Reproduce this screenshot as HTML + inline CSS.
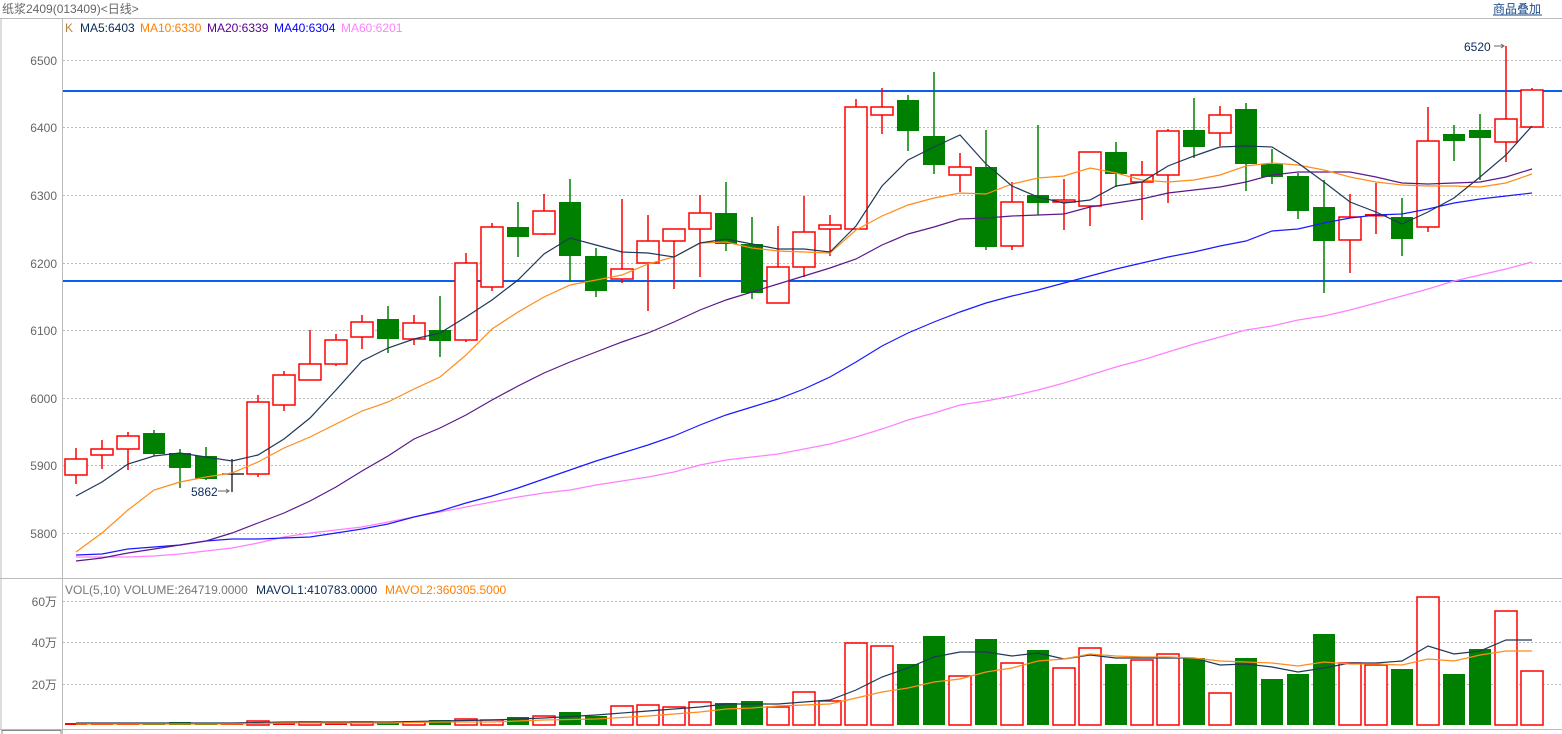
<!DOCTYPE html>
<html><head><meta charset="utf-8"><style>
body{margin:0;background:#fff;width:1562px;height:734px;overflow:hidden;font-family:"Liberation Sans","Noto Sans CJK SC",sans-serif}
svg{display:block}
.r{fill:#fff;stroke:#f00;stroke-width:1.5}
.rw{stroke:#f00;stroke-width:1.5;fill:none}
.g{fill:#008000}
.gw{stroke:#008000;stroke-width:1.5}
.grid{stroke:#bbb;stroke-width:1;stroke-dasharray:2,2}
.ax{font-size:12px;fill:#666;text-anchor:end}
text{font-family:"Liberation Sans","Noto Sans CJK SC",sans-serif}
.ma{fill:none;stroke-width:1.2}
</style></head><body>
<svg width="1562" height="734" viewBox="0 0 1562 734">
<text x="2" y="13" font-size="12" fill="#666">纸浆2409(013409)&lt;日线&gt;</text>
<text x="1493" y="13" font-size="12" fill="#1a4a8a">商品叠加</text>
<line x1="1493" y1="15" x2="1542" y2="15" stroke="#1a4a8a"/>
<line x1="0" y1="18.5" x2="1562" y2="18.5" stroke="#bbb"/>
<line x1="1" y1="18" x2="1" y2="729" stroke="#bbb"/>
<line x1="62.5" y1="18" x2="62.5" y2="734" stroke="#bbb"/>
<line x1="0" y1="578.5" x2="1562" y2="578.5" stroke="#bbb"/>
<line x1="0" y1="729.5" x2="1562" y2="729.5" stroke="#bbb"/>
<rect x="2" y="730.5" width="59" height="6" fill="none" stroke="#888"/>
<text x="65" y="32" font-size="12" fill="#c08040">K</text>
<text x="80" y="32" font-size="12" fill="#0a2a5a">MA5:6403</text>
<text x="140" y="32" font-size="12" fill="#ff8000">MA10:6330</text>
<text x="207" y="32" font-size="12" fill="#5a0090">MA20:6339</text>
<text x="274" y="32" font-size="12" fill="#0000ff">MA40:6304</text>
<text x="341" y="32" font-size="12" fill="#ff80ff">MA60:6201</text>
<g class="grid">
<line x1="63" y1="60.5" x2="1562" y2="60.5"/><line x1="63" y1="127.5" x2="1562" y2="127.5"/><line x1="63" y1="195.5" x2="1562" y2="195.5"/><line x1="63" y1="263.5" x2="1562" y2="263.5"/><line x1="63" y1="330.5" x2="1562" y2="330.5"/><line x1="63" y1="398.5" x2="1562" y2="398.5"/><line x1="63" y1="465.5" x2="1562" y2="465.5"/><line x1="63" y1="533.5" x2="1562" y2="533.5"/>
<line x1="63" y1="601.5" x2="1562" y2="601.5"/><line x1="63" y1="642.5" x2="1562" y2="642.5"/><line x1="63" y1="684.5" x2="1562" y2="684.5"/>
</g>
<g class="ax">
<text x="57" y="65">6500</text><text x="57" y="132">6400</text><text x="57" y="200">6300</text><text x="57" y="268">6200</text><text x="57" y="335">6100</text><text x="57" y="403">6000</text><text x="57" y="470">5900</text><text x="57" y="538">5800</text>
<text x="57" y="606">60万</text><text x="57" y="647">40万</text><text x="57" y="689">20万</text>
</g>
<line x1="63" y1="91" x2="1562" y2="91" stroke="#0a5ef0" stroke-width="2"/>
<line x1="63" y1="281" x2="1562" y2="281" stroke="#0a5ef0" stroke-width="2"/>

<g>
<rect class="r" x="65" y="459" width="22" height="16"/><path class="rw" d="M76 448V459M76 475V484"/>
<rect class="r" x="91" y="449" width="22" height="6"/><path class="rw" d="M102 440V449M102 455V469"/>
<rect class="r" x="117" y="436" width="22" height="13"/><path class="rw" d="M128 432V436M128 449V470"/>
<line class="gw" x1="154" y1="430" x2="154" y2="456"/><rect class="g" x="143" y="433" width="22" height="21"/>
<line class="gw" x1="180" y1="449" x2="180" y2="488"/><rect class="g" x="169" y="453" width="22" height="15"/>
<line class="gw" x1="206" y1="447" x2="206" y2="480"/><rect class="g" x="195" y="456" width="22" height="23"/>
<path d="M232 459V492M222 474H244" stroke="#000" stroke-width="1.2" fill="none"/>
<text x="191" y="496" font-size="12" fill="#0a2a5a">5862</text><path d="M218 491H229M226 489L229 491L226 493" stroke="#666" fill="none"/>
<rect class="r" x="247" y="402" width="22" height="72"/><path class="rw" d="M258 395V402M258 474V477"/>
<rect class="r" x="273" y="375" width="22" height="30"/><path class="rw" d="M284 371V375M284 405V411"/>
<rect class="r" x="299" y="364" width="22" height="16"/><path class="rw" d="M310 330V364"/>
<rect class="r" x="325" y="340" width="22" height="24"/><path class="rw" d="M336 334V340M336 364V366"/>
<rect class="r" x="351" y="322" width="22" height="15"/><path class="rw" d="M362 315V322M362 337V349"/>
<line class="gw" x1="388" y1="306" x2="388" y2="353"/><rect class="g" x="377" y="319" width="22" height="20"/>
<rect class="r" x="403" y="323" width="22" height="16"/><path class="rw" d="M414 315V323M414 339V345"/>
<line class="gw" x1="440" y1="296" x2="440" y2="357"/><rect class="g" x="429" y="330" width="22" height="11"/>
<rect class="r" x="455" y="263" width="22" height="77"/><path class="rw" d="M466 253V263M466 340V342"/>
<rect class="r" x="481" y="227" width="22" height="60"/><path class="rw" d="M492 223V227M492 287V291"/>
<line class="gw" x1="518" y1="202" x2="518" y2="257"/><rect class="g" x="507" y="227" width="22" height="10"/>
<rect class="r" x="533" y="211" width="22" height="23"/><path class="rw" d="M544 194V211M544 234V235"/>
<line class="gw" x1="570" y1="179" x2="570" y2="281"/><rect class="g" x="559" y="202" width="22" height="54"/>
<line class="gw" x1="596" y1="248" x2="596" y2="297"/><rect class="g" x="585" y="256" width="22" height="35"/>
<rect class="r" x="611" y="269" width="22" height="10"/><path class="rw" d="M622 199V269M622 279V283"/>
<rect class="r" x="637" y="241" width="22" height="22"/><path class="rw" d="M648 215V241M648 263V311"/>
<rect class="r" x="663" y="229" width="22" height="12"/><path class="rw" d="M674 241V289"/>
<rect class="r" x="689" y="213" width="22" height="16"/><path class="rw" d="M700 195V213M700 229V277"/>
<line class="gw" x1="726" y1="182" x2="726" y2="251"/><rect class="g" x="715" y="213" width="22" height="31"/>
<line class="gw" x1="752" y1="217" x2="752" y2="299"/><rect class="g" x="741" y="244" width="22" height="49"/>
<rect class="r" x="767" y="267" width="22" height="36"/><path class="rw" d="M778 226V267"/>
<rect class="r" x="793" y="232" width="22" height="35"/><path class="rw" d="M804 196V232M804 267V277"/>
<rect class="r" x="819" y="225" width="22" height="4"/><path class="rw" d="M830 215V225M830 229V256"/>
<rect class="r" x="845" y="107" width="22" height="122"/><path class="rw" d="M856 99V107"/>
<rect class="r" x="871" y="107" width="22" height="8"/><path class="rw" d="M882 88V107M882 115V134"/>
<line class="gw" x1="908" y1="95" x2="908" y2="151"/><rect class="g" x="897" y="100" width="22" height="31"/>
<line class="gw" x1="934" y1="72" x2="934" y2="174"/><rect class="g" x="923" y="136" width="22" height="29"/>
<rect class="r" x="949" y="167" width="22" height="8"/><path class="rw" d="M960 153V167M960 175V192"/>
<line class="gw" x1="986" y1="130" x2="986" y2="250"/><rect class="g" x="975" y="167" width="22" height="80"/>
<rect class="r" x="1001" y="202" width="22" height="44"/><path class="rw" d="M1012 182V202M1012 246V250"/>
<line class="gw" x1="1038" y1="125" x2="1038" y2="215"/><rect class="g" x="1027" y="195" width="22" height="8"/>
<rect class="r" x="1053" y="200" width="22" height="2"/><path class="rw" d="M1064 179V200M1064 202V230"/>
<rect class="r" x="1079" y="152" width="22" height="54"/><path class="rw" d="M1090 206V226"/>
<line class="gw" x1="1116" y1="142" x2="1116" y2="187"/><rect class="g" x="1105" y="152" width="22" height="22"/>
<rect class="r" x="1131" y="175" width="22" height="7"/><path class="rw" d="M1142 161V175M1142 182V220"/>
<rect class="r" x="1157" y="131" width="22" height="44"/><path class="rw" d="M1168 129V131M1168 175V203"/>
<line class="gw" x1="1194" y1="98" x2="1194" y2="158"/><rect class="g" x="1183" y="130" width="22" height="17"/>
<rect class="r" x="1209" y="115" width="22" height="18"/><path class="rw" d="M1220 106V115M1220 133V146"/>
<line class="gw" x1="1246" y1="103" x2="1246" y2="191"/><rect class="g" x="1235" y="109" width="22" height="55"/>
<line class="gw" x1="1272" y1="149" x2="1272" y2="184"/><rect class="g" x="1261" y="164" width="22" height="13"/>
<line class="gw" x1="1298" y1="173" x2="1298" y2="219"/><rect class="g" x="1287" y="176" width="22" height="35"/>
<line class="gw" x1="1324" y1="180" x2="1324" y2="293"/><rect class="g" x="1313" y="207" width="22" height="34"/>
<rect class="r" x="1339" y="217" width="22" height="23"/><path class="rw" d="M1350 194V217M1350 240V273"/>
<path class="rw" d="M1376 183V234"/><rect x="1365" y="214" width="22" height="2.5" fill="#f00"/>
<line class="gw" x1="1402" y1="198" x2="1402" y2="256"/><rect class="g" x="1391" y="217" width="22" height="22"/>
<rect class="r" x="1417" y="141" width="22" height="86"/><path class="rw" d="M1428 107V141M1428 227V232"/>
<line class="gw" x1="1454" y1="125" x2="1454" y2="161"/><rect class="g" x="1443" y="134" width="22" height="7"/>
<line class="gw" x1="1480" y1="114" x2="1480" y2="180"/><rect class="g" x="1469" y="130" width="22" height="8"/>
<rect class="r" x="1495" y="119" width="22" height="23"/><path class="rw" d="M1506 46V119M1506 142V162"/>
<rect class="r" x="1521" y="90" width="22" height="37"/><path class="rw" d="M1532 88V90"/>
<text x="1464" y="51" font-size="12" fill="#0a2a5a">6520</text><path d="M1494 46H1504M1501 44L1504 46L1501 48" stroke="#666" fill="none"/>
</g>

<polyline class="ma" stroke="#ff80ff" points="76,557 102,557 128,557 154,556 180,554 206,551 232,548 258,543 284,537 310,533 336,530 362,527 388,522 414,517 440,512 466,507 492,502 518,497 544,493 570,490 596,485 622,481 648,477 674,472 700,465 726,460 752,457 778,454 804,449 830,444 856,437 882,429 908,420 934,413 960,405 986,401 1012,396 1038,390 1064,383 1090,375 1116,367 1142,360 1168,352 1194,344 1220,337 1246,330 1272,326 1298,320 1324,316 1350,310 1376,303 1402,296 1428,289 1454,281 1480,275 1506,269 1532,262"/>
<polyline class="ma" stroke="#1a1aff" points="76,555 102,554 128,549 154,547 180,545 206,541 232,539 258,539 284,538 310,537 336,533 362,529 388,524 414,517 440,511 466,503 492,496 518,488 544,479 570,470 596,461 622,453 648,445 674,436 700,425 726,415 752,407 778,399 804,389 830,377 856,362 882,346 908,333 934,322 960,312 986,303 1012,296 1038,290 1064,283 1090,276 1116,269 1142,263 1168,257 1194,252 1220,246 1246,241 1272,231 1298,229 1324,223 1350,218 1376,215 1402,214 1428,209 1454,203 1480,199 1506,196 1532,193"/>
<polyline class="ma" stroke="#5a1a8a" points="76,561 102,558 128,553 154,549 180,545 206,541 232,533 258,523 284,513 310,501 336,487 362,471 388,456 414,439 440,428 466,415 492,400 518,386 544,373 570,362 596,352 622,342 648,333 674,322 700,310 726,300 752,292 778,284 804,276 830,268 856,259 882,245 908,234 934,227 960,219 986,218 1012,216 1038,215 1064,214 1090,207 1116,203 1142,199 1168,193 1194,190 1220,187 1246,182 1272,175 1298,172 1324,172 1350,172 1376,177 1402,183 1428,184 1454,183 1480,182 1506,177 1532,169"/>
<polyline class="ma" stroke="#ff8c1a" points="76,552 102,533 128,510 154,490 180,482 206,477 232,473 258,462 284,448 310,437 336,424 362,411 388,402 414,389 440,377 466,355 492,329 518,312 544,297 570,285 596,280 622,275 648,264 674,257 700,243 726,242 752,248 778,251 804,252 830,253 856,230 882,216 908,205 934,198 960,193 986,194 1012,184 1038,178 1064,176 1090,168 1116,173 1142,180 1168,182 1194,180 1220,175 1246,166 1272,163 1298,165 1324,170 1350,177 1376,182 1402,185 1428,186 1454,186 1480,187 1506,183 1532,174"/>
<polyline class="ma" stroke="#203858" points="76,496 102,482 128,464 154,456 180,453 206,457 232,461 258,455 284,439 310,418 336,390 362,361 388,348 414,339 440,333 466,317 492,300 518,280 544,254 570,238 596,245 622,252 648,253 674,257 700,243 726,239 752,244 778,249 804,249 830,252 856,226 882,186 908,160 934,147 960,135 986,164 1012,186 1038,197 1064,203 1090,200 1116,186 1142,182 1168,166 1194,156 1220,147 1246,146 1272,147 1298,163 1324,182 1350,202 1376,212 1402,224 1428,212 1454,198 1480,177 1506,155 1532,126"/>

<text x="65" y="594" font-size="12" fill="#777">VOL(5,10) VOLUME:264719.0000</text>
<text x="256" y="594" font-size="12" fill="#0a2a5a">MAVOL1:410783.0000</text>
<text x="385" y="594" font-size="12" fill="#ff8000">MAVOL2:360305.5000</text>
<g>
<rect x="65" y="723" width="22" height="2" fill="#f00"/>
<rect x="91" y="724" width="22" height="1" fill="#f00"/>
<rect x="117" y="724" width="22" height="1" fill="#f00"/>
<rect x="143" y="723" width="22" height="2" fill="#008000"/>
<rect x="169" y="722" width="22" height="3" fill="#008000"/>
<rect x="195" y="723" width="22" height="2" fill="#008000"/>
<rect x="221" y="723" width="22" height="2" fill="#f00"/>
<rect class="r" x="247" y="721" width="22" height="4"/>
<rect x="273" y="723" width="22" height="2" fill="#f00"/>
<rect class="r" x="299" y="722" width="22" height="3"/>
<rect x="325" y="723" width="22" height="2" fill="#f00"/>
<rect class="r" x="351" y="722" width="22" height="3"/>
<rect x="377" y="723" width="22" height="2" fill="#008000"/>
<rect class="r" x="403" y="722" width="22" height="3"/>
<rect class="g" x="429" y="720" width="22" height="5"/>
<rect class="r" x="455" y="719" width="22" height="6"/>
<rect class="r" x="481" y="720" width="22" height="5"/>
<rect class="g" x="507" y="717" width="22" height="8"/>
<rect class="r" x="533" y="716" width="22" height="9"/>
<rect class="g" x="559" y="712" width="22" height="13"/>
<rect class="g" x="585" y="716" width="22" height="9"/>
<rect class="r" x="611" y="706" width="22" height="19"/>
<rect class="r" x="637" y="705" width="22" height="20"/>
<rect class="r" x="663" y="707" width="22" height="18"/>
<rect class="r" x="689" y="702" width="22" height="23"/>
<rect class="g" x="715" y="703" width="22" height="22"/>
<rect class="g" x="741" y="701" width="22" height="24"/>
<rect class="r" x="767" y="707" width="22" height="18"/>
<rect class="r" x="793" y="692" width="22" height="33"/>
<rect class="r" x="819" y="701" width="22" height="24"/>
<rect class="r" x="845" y="643" width="22" height="82"/>
<rect class="r" x="871" y="646" width="22" height="79"/>
<rect class="g" x="897" y="664" width="22" height="61"/>
<rect class="g" x="923" y="636" width="22" height="89"/>
<rect class="r" x="949" y="676" width="22" height="49"/>
<rect class="g" x="975" y="639" width="22" height="86"/>
<rect class="r" x="1001" y="663" width="22" height="62"/>
<rect class="g" x="1027" y="650" width="22" height="75"/>
<rect class="r" x="1053" y="668" width="22" height="57"/>
<rect class="r" x="1079" y="648" width="22" height="77"/>
<rect class="g" x="1105" y="664" width="22" height="61"/>
<rect class="r" x="1131" y="660" width="22" height="65"/>
<rect class="r" x="1157" y="654" width="22" height="71"/>
<rect class="g" x="1183" y="658" width="22" height="67"/>
<rect class="r" x="1209" y="693" width="22" height="32"/>
<rect class="g" x="1235" y="658" width="22" height="67"/>
<rect class="g" x="1261" y="679" width="22" height="46"/>
<rect class="g" x="1287" y="674" width="22" height="51"/>
<rect class="g" x="1313" y="634" width="22" height="91"/>
<rect class="r" x="1339" y="663" width="22" height="62"/>
<rect class="r" x="1365" y="665" width="22" height="60"/>
<rect class="g" x="1391" y="669" width="22" height="56"/>
<rect class="r" x="1417" y="597" width="22" height="128"/>
<rect class="g" x="1443" y="674" width="22" height="51"/>
<rect class="g" x="1469" y="649" width="22" height="76"/>
<rect class="r" x="1495" y="611" width="22" height="114"/>
<rect class="r" x="1521" y="671" width="22" height="54"/>
</g>
<polyline class="ma" stroke="#203858" points="76,723 128,723 180,723 232,723 284,722 336,722 388,722 440,721 492,720 544,718 596,715 648,711 700,707 726,704 752,704 778,704 804,702 830,700 856,690 882,677 908,668 934,657 960,652 986,652 1012,656 1038,653 1064,659 1090,655 1116,658 1142,658 1168,658 1194,658 1220,665 1246,664 1272,667 1298,672 1324,668 1350,663 1376,663 1402,661 1428,646 1454,654 1480,651 1506,640 1532,640"/>
<polyline class="ma" stroke="#ff8c1a" points="76,724 128,724 180,724 232,724 284,723 336,723 388,723 440,722 492,722 544,720 596,719 648,716 700,712 726,709 752,708 778,706 804,705 830,704 856,698 882,692 908,688 934,682 960,679 986,672 1012,668 1038,661 1064,659 1090,654 1116,656 1142,657 1168,657 1194,658 1220,661 1246,662 1272,663 1298,666 1324,662 1350,664 1376,664 1402,665 1428,659 1454,661 1480,655 1506,651 1532,651"/>
</svg>
</body></html>
